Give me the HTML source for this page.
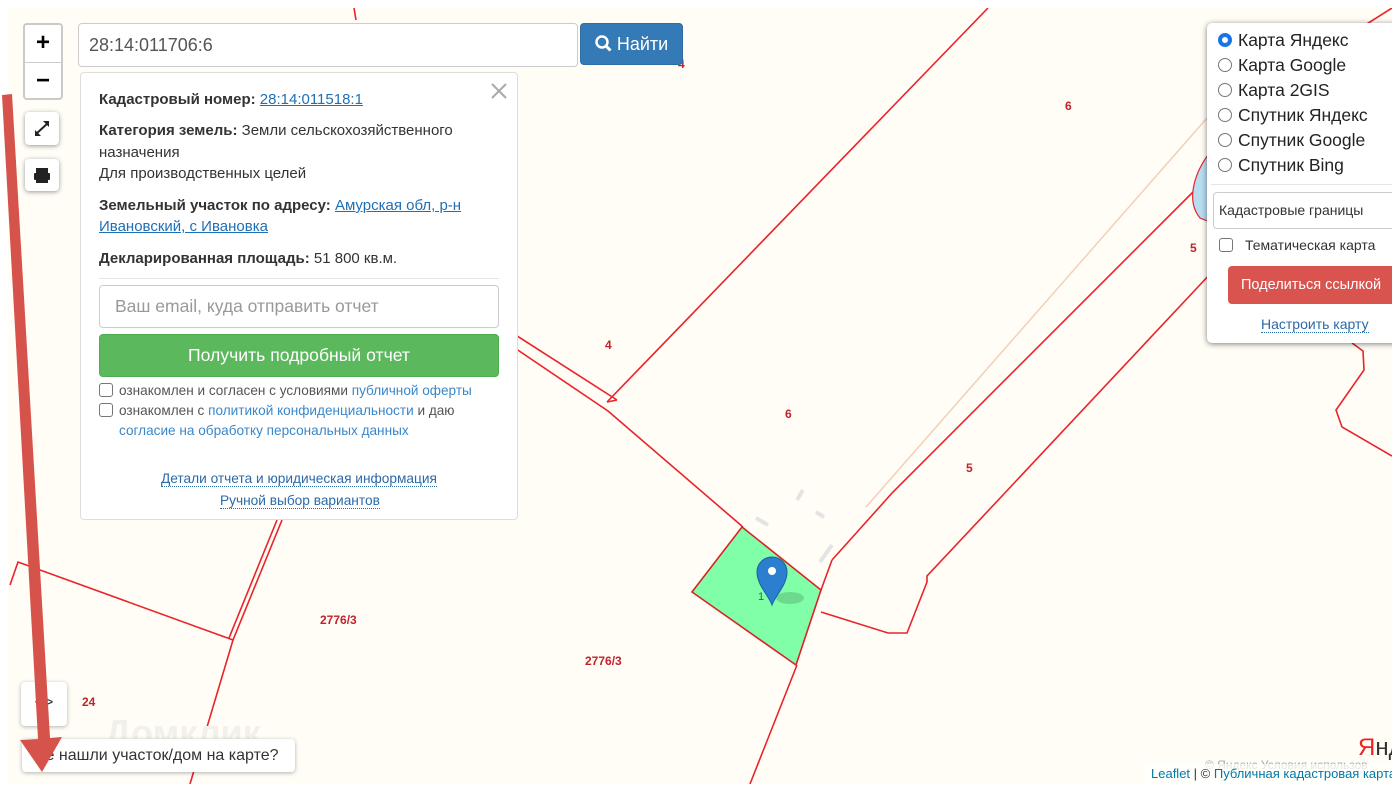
<!DOCTYPE html>
<html><head><meta charset="utf-8"><style>
*{box-sizing:border-box;margin:0;padding:0}
body{width:1392px;height:792px;background:#fff;font-family:"Liberation Sans",Arial,sans-serif;position:relative;overflow:hidden;color:#333}
#map{position:absolute;left:8px;top:8px;width:1384px;height:776px;background:#fffdf6;overflow:hidden}
svg.m{position:absolute;left:0;top:0}
.abs{position:absolute}
.zoom{left:23px;top:23px;width:40px;height:77px;border:2px solid rgba(0,0,0,.2);border-radius:4px;background:#fff;background-clip:padding-box}
.zoom div{height:37px;text-align:center;font:bold 24px/36px "Liberation Sans",sans-serif;color:#000}
.zoom div+div{border-top:1px solid #ccc}
.btn{width:34px;height:33px;background:#fff;border-radius:4px;box-shadow:0 1px 5px rgba(0,0,0,.4)}
.inp{left:78px;top:23px;width:500px;height:44px;border:1px solid #ccc;border-radius:4px;background:#fff;font-size:18px;line-height:42px;padding-left:10px;color:#555}
.find{left:580px;top:23px;width:103px;height:42px;background:#337ab7;border:1px solid #2e6da4;border-radius:4px;color:#fff;font-size:18px;line-height:40px;text-align:center}
.panel{left:80px;top:72px;width:438px;height:448px;background:#fff;border:1px solid #ddd;border-radius:4px;font-size:15px;color:#333}
.panel p{position:absolute;left:18px;white-space:nowrap}
a,.lk{color:#1f6fb5;text-decoration:underline}
.lb{color:#3a87c9}
.dot{color:#2a6aa8;border-bottom:1px dotted #2a6aa8}
.cb{display:inline-block;width:14px;height:14px;border:1px solid #767676;border-radius:3px;vertical-align:-2px;margin-right:6px;background:#fff}
.rp{left:1207px;top:23px;width:200px;height:320px;background:#fff;border-radius:5px;box-shadow:0 1px 6px rgba(0,0,0,.5)}
.rad{position:absolute;left:11px;font-size:17.5px;color:#222;white-space:nowrap}
.rad i{display:inline-block;width:14px;height:14px;border:1px solid #767676;border-radius:50%;vertical-align:-1px;margin-right:6px;background:#fff}
</style></head><body>
<div id="map">
<svg class="m" width="1384" height="776" viewBox="8 8 1384 776">
<g fill="none" stroke="#e8242a" stroke-width="1.6">
<line x1="988" y1="8" x2="607" y2="402"/>
<polyline points="500,325 617,400"/>
<polyline points="500,338 608,411 743,527"/>
<polyline points="607,402 617,400"/>
<line x1="354" y1="8" x2="356" y2="20"/>
<polyline points="832,560 893,492 1195,190"/>
<polyline points="821,612 888,633 907,633 927,582 927,576 1212,272"/>
<polyline points="832,560 821,590"/>
<line x1="797" y1="665" x2="750" y2="784"/>
<polyline points="1352,343 1363,351 1364,370 1336,410 1342,427 1392,456"/>
<polyline points="10,585 18,562 233,640"/>
<polyline points="282,520 233,640 190,784"/>
<polyline points="277,520 229,638"/>
<line x1="1392" y1="8" x2="1215" y2="120"/>
</g>
<path d="M1212,150 C1195,170 1185,200 1200,218 L1210,222 Z" fill="#b8dcf0" stroke="#e8242a" stroke-width="1.2"/>
<line x1="866" y1="507" x2="1207" y2="118" stroke="#f0d0b8" stroke-width="1.5"/>
<g stroke="#e4e4e4" stroke-width="4"><line x1="756" y1="518" x2="768" y2="525"/><line x1="797" y1="500" x2="803" y2="490"/><line x1="816" y1="512" x2="824" y2="517"/><line x1="820" y1="562" x2="832" y2="545"/></g>
<polygon points="742,527 821,590 796,665 692,592" fill="#80ffa8" stroke="#d8232a" stroke-width="1.6"/>
<g fill="#c0232a" font-family="Liberation Sans,sans-serif" font-weight="bold" font-size="12">
<text x="1065" y="110">6</text><text x="605" y="349">4</text><text x="785" y="418">6</text><text x="966" y="472">5</text><text x="1190" y="252">5</text><text x="678" y="68">4</text>
<text x="82" y="706">24</text><text x="320" y="624">2776/3</text><text x="585" y="665">2776/3</text>
</g>
<text x="758" y="600" font-size="11" fill="#555">1</text>
<text x="105" y="745" font-size="36" font-weight="bold" fill="#f2f0ea">Домклик</text>
<ellipse cx="790" cy="598" rx="14" ry="6" fill="rgba(0,0,0,.15)"/>
<path d="M772,605 C769,596 757,585 757,572 A15,15 0 0 1 787,572 C787,585 775,596 772,605 Z" fill="#2b7fcf" stroke="#1f5f9e" stroke-width="1"/>
<circle cx="772" cy="571" r="4" fill="#fff"/>
<text x="1358" y="755" font-size="24" fill="#e22" font-family="Liberation Sans">Я<tspan fill="#333">нд</tspan></text>
</svg>
</div>

<div class="abs zoom"><div>+</div><div>−</div></div>
<div class="abs btn" style="left:25px;top:112px"><svg width="34" height="33"><g stroke="#222" stroke-width="2" fill="#222"><line x1="11" y1="22" x2="23" y2="11"/><polygon points="24,9 24,15 18,9" stroke-width="0"/><polygon points="10,24 10,18 16,24" stroke-width="0"/></g></svg></div>
<div class="abs btn" style="left:25px;top:159px;height:32px"><svg width="34" height="32"><rect x="11" y="9" width="12" height="5" fill="#222"/><rect x="9" y="14" width="16" height="7" rx="1" fill="#222"/><rect x="11" y="19" width="12" height="5" fill="#222"/></svg></div>

<div class="abs inp">28:14:011706:6</div>
<div class="abs find"><svg width="17" height="17" style="vertical-align:-2px"><circle cx="7" cy="7" r="5.5" stroke="#fff" stroke-width="2.5" fill="none"/><line x1="11" y1="11" x2="15.5" y2="15.5" stroke="#fff" stroke-width="3"/></svg>&nbsp;Найти</div>

<div class="abs panel">
<svg class="abs" style="left:410px;top:10px" width="16" height="16"><g stroke="#aaa" stroke-width="2"><line x1="1" y1="1" x2="15" y2="15"/><line x1="15" y1="1" x2="1" y2="15"/></g></svg>
<p style="top:18px"><b>Кадастровый номер:</b> <span class="lk">28:14:011518:1</span></p>
<p style="top:49px"><b>Категория земель:</b> Земли сельскохозяйственного</p>
<p style="top:71px">назначения</p>
<p style="top:92px">Для производственных целей</p>
<p style="top:124px"><b>Земельный участок по адресу:</b> <span class="lk">Амурская обл, р-н</span></p>
<p style="top:145px"><span class="lk">Ивановский, с Ивановка</span></p>
<p style="top:177px"><b>Декларированная площадь:</b> 51 800 кв.м.</p>
<div class="abs" style="left:18px;top:205px;width:400px;border-top:1px solid #e5e5e5"></div>
<div class="abs" style="left:18px;top:212px;width:400px;height:43px;border:1px solid #ccc;border-radius:4px;font-size:17.5px;line-height:41px;padding-left:15px;color:#999">Ваш email, куда отправить отчет</div>
<div class="abs" style="left:18px;top:261px;width:400px;height:43px;background:#5cb85c;border:1px solid #4cae4c;border-radius:4px;font-size:17.6px;line-height:41px;text-align:center;color:#fff">Получить подробный отчет</div>
<p style="top:310px;color:#555;font-size:13.6px"><span class="cb"></span>ознакомлен и согласен с условиями <span class="lb">публичной оферты</span></p>
<p style="top:330px;color:#555;font-size:13.6px"><span class="cb"></span>ознакомлен с <span class="lb">политикой конфиденциальности</span> и даю</p>
<p style="top:350px;left:38px;font-size:13.6px"><span class="lb">согласие на обработку персональных данных</span></p>
<p style="top:398px;left:80px;font-size:13.7px"><span class="dot">Детали отчета и юридическая информация</span></p>
<p style="top:420px;left:139px;font-size:13.7px"><span class="dot">Ручной выбор вариантов</span></p>
</div>

<div class="abs rp">
<div class="rad" style="top:7px"><i style="border:4px solid #1a73e8"></i>Карта Яндекс</div>
<div class="rad" style="top:32px"><i></i>Карта Google</div>
<div class="rad" style="top:57px"><i></i>Карта 2GIS</div>
<div class="rad" style="top:82px"><i></i>Спутник Яндекс</div>
<div class="rad" style="top:107px"><i></i>Спутник Google</div>
<div class="rad" style="top:132px"><i></i>Спутник Bing</div>
<div class="abs" style="left:4px;top:161px;width:200px;border-top:1px solid #e5e5e5"></div>
<div class="abs" style="left:6px;top:169px;width:200px;height:37px;border:1px solid #ccc;border-radius:4px;font-size:14px;line-height:35px;padding-left:5px;color:#333">Кадастровые границы</div>
<div class="abs" style="left:12px;top:214px;font-size:14px;color:#333;white-space:nowrap"><span class="cb" style="margin-right:12px"></span>Тематическая карта</div>
<div class="abs" style="left:21px;top:243px;width:180px;height:38px;background:#d9534f;border-radius:4px;color:#fff;font-size:14.5px;line-height:38px;padding-left:13px">Поделиться ссылкой</div>
<div class="abs" style="left:54px;top:293px;font-size:14px"><span class="dot">Настроить карту</span></div>
</div>

<div class="abs" style="left:21px;top:682px;width:46px;height:44px;background:#fff;border-radius:4px;box-shadow:0 1px 4px rgba(0,0,0,.3);font-size:16px;text-align:center;line-height:42px">&lt;&gt;</div>
<div class="abs" style="left:22px;top:739px;width:273px;height:33px;background:#fff;border-radius:4px;box-shadow:0 1px 4px rgba(0,0,0,.3);font-size:16px;line-height:33px;padding-left:12px;color:#333">Не нашли участок/дом на карте?</div>
<svg class="abs" style="left:0;top:0" width="80" height="792"><polygon points="2,95 12,94 50,738 62,737 42,772 20,740 38,739" fill="#d6534b"/></svg>

<div class="abs" style="left:1205px;top:758px;font-size:12px;color:#aaa;white-space:nowrap">© Яндекс  Условия использов</div>
<div class="abs" style="left:1145px;top:764px;width:247px;height:20px;background:rgba(255,255,255,.7);font-size:13px;line-height:20px;padding-left:6px;white-space:nowrap;color:#333"><span style="color:#0078a8">Leaflet</span> | © <span style="color:#0078a8">Публичная кадастровая карта</span></div>
</body></html>
